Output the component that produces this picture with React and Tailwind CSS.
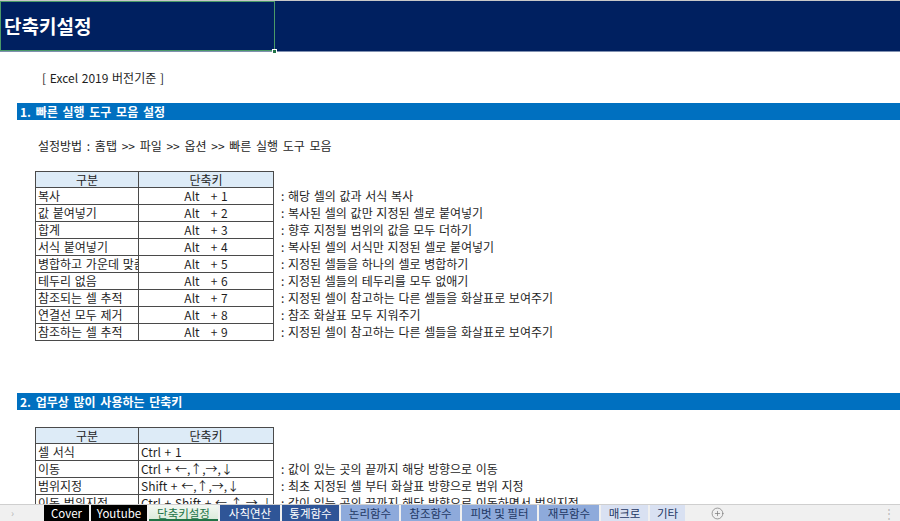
import React from 'react';
import { CirclePlus } from 'lucide-react';

const quickRows = [
  ['복사', '1', ': 해당 셀의 값과 서식 복사'],
  ['값 붙여넣기', '2', ': 복사된 셀의 값만 지정된 셀로 붙여넣기'],
  ['합계', '3', ': 향후 지정될 범위의 값을 모두 더하기'],
  ['서식 붙여넣기', '4', ': 복사된 셀의 서식만 지정된 셀로 붙여넣기'],
  ['병합하고 가운데 맞춤', '5', ': 지정된 셀들을 하나의 셀로 병합하기'],
  ['테두리 없음', '6', ': 지정된 셀들의 테두리를 모두 없애기'],
  ['참조되는 셀 추적', '7', ': 지정된 셀이 참고하는 다른 셀들을 화살표로 보여주기'],
  ['연결선 모두 제거', '8', ': 참조 화살표 모두 지워주기'],
  ['참조하는 셀 추적', '9', ': 지정된 셀이 참고하는 다른 셀들을 화살표로 보여주기'],
];

const workRows = [
  ['셀 서식', 'Ctrl + 1', ''],
  ['이동', 'Ctrl + ←,↑,→,↓', ': 값이 있는 곳의 끝까지 해당 방향으로 이동'],
  ['범위지정', 'Shift + ←,↑,→,↓', ': 최초 지정된 셀 부터 화살표 방향으로 범위 지정'],
  ['이동 범위지정', 'Ctrl + Shift + ←,↑,→,↓', ': 값이 있는 곳의 끝까지 해당 방향으로 이동하면서 범위지정'],
];

const tabs = [
  { name: 'Cover', w: 'w-[45px]', cls: 'bg-black text-white' },
  { name: 'Youtube', w: 'w-[56px]', cls: 'bg-black text-white' },
  { name: '단축키설정', w: 'w-[69px]', cls: 'bg-gradient-to-b from-[#f4f9f4] to-[#dcebdc] text-[#217346] border-b-2 border-[#217346]' },
  { name: '사칙연산', w: 'w-[60px]', cls: 'bg-[#2f5597] text-white' },
  { name: '통계함수', w: 'w-[57px]', cls: 'bg-[#2f5597] text-white' },
  { name: '논리함수', w: 'w-[58px]', cls: 'bg-[#8eaadb] text-[#1f3864]' },
  { name: '참조함수', w: 'w-[59px]', cls: 'bg-[#8eaadb] text-[#1f3864]' },
  { name: '피벗 및 필터', w: 'w-[75px]', cls: 'bg-[#8eaadb] text-[#1f3864]' },
  { name: '재무함수', w: 'w-[60px]', cls: 'bg-[#8eaadb] text-[#1f3864]' },
  { name: '매크로', w: 'w-[47px]', cls: 'bg-[#d9e1f2] text-[#1f3864]' },
  { name: '기타', w: 'w-[35px]', cls: 'bg-[#d9e1f2] text-[#1f3864]' },
];

const Blank = () => <div className="h-[17px]" />;

const SectionBar = ({ children }) => (
  <div className="ml-[17px] h-[17px] bg-[#0070c0] text-white font-bold text-[12px] leading-[17px] pl-[3px] [word-spacing:2px]">
    {children}
  </div>
);

const ShortcutTable = ({ rows, centerKeys }) => (
  <div className="ml-[35px]">
    <div className="flex h-[17px] leading-[16px]">
      <div className="w-[104px] bg-[#ddebf7] border border-[#4a4a4a] text-center">구분</div>
      <div className="w-[135px] bg-[#ddebf7] border-y border-r border-[#4a4a4a] text-center">단축키</div>
    </div>
    {rows.map(([name, keys, desc]) => (
      <div key={name} className="flex h-[17px] leading-[16px]">
        <div className="w-[104px] border-x border-b border-[#4a4a4a] pl-[2px] overflow-hidden whitespace-nowrap">
          {name}
        </div>
        {centerKeys ? (
          <div className="w-[135px] border-r border-b border-[#4a4a4a] text-center whitespace-pre">
            {'Alt   + ' + keys}
          </div>
        ) : (
          <div className="w-[135px] border-r border-b border-[#4a4a4a] pl-[2px] whitespace-nowrap overflow-hidden">
            {keys}
          </div>
        )}
        <div className="pl-[7px] whitespace-nowrap">{desc}</div>
      </div>
    ))}
  </div>
);

export default function App() {
  return (
    <div className="w-[900px] h-[521px] flex flex-col overflow-hidden bg-white text-[12px] [word-spacing:1px] text-[#1e1e1e] font-['Noto_Sans_CJK_KR','Liberation_Sans',sans-serif]">
      <div className="flex-1 overflow-hidden">
        <div className="relative h-[52px] bg-[#002060] border-t border-[#c8c8c8] border-b border-b-[#8090b0]">
          <div className="w-[275px] h-full border border-[#4a9a68] flex items-center pl-[3px] text-white font-bold text-[19px]">
            단축키설정
          </div>
          <div className="absolute left-[272px] bottom-[-3px] w-[5px] h-[5px] bg-[#217346] border border-white" />
        </div>
        <Blank />
        <div className="h-[17px] leading-[17px] pl-[42px]">[ Excel 2019 버전기준 ]</div>
        <Blank />
        <SectionBar>1. 빠른 실행 도구 모음 설정</SectionBar>
        <Blank />
        <div className="h-[17px] leading-[17px] pl-[38px] whitespace-pre [word-spacing:2px]">
          설정방법 : 홈탭 {'>>'} 파일 {'>>'} 옵션 {'>>'} 빠른 실행 도구 모음
        </div>
        <Blank />
        <ShortcutTable rows={quickRows} centerKeys />
        <Blank />
        <Blank />
        <div className="h-[18px]" />
        <SectionBar>2. 업무상 많이 사용하는 단축키</SectionBar>
        <Blank />
        <ShortcutTable rows={workRows} />
      </div>

      <div className="h-[17px] flex items-stretch bg-[#f0f0f0] border-t border-[#cfcfcf] text-[11.5px] leading-[16px] [word-spacing:0px]">
        <div className="w-[44px] flex items-center pl-[11px] text-[#b8b8b8] text-[10px]">›</div>
        <div className="flex gap-[2px]">
          {tabs.map((t) => (
            <div
              key={t.name}
              className={`${t.w} ${t.cls} text-center whitespace-nowrap overflow-hidden`}
            >
              {t.name}
            </div>
          ))}
        </div>
        <div className="w-[56px] flex items-center justify-center pl-[8px] text-[#777]">
          <CirclePlus size={13} strokeWidth={1.3} />
        </div>
        <div className="flex-1 flex items-center justify-end pr-[5px] text-[#bcbcbc] text-[12px]">⋮</div>
      </div>
    </div>
  );
}
